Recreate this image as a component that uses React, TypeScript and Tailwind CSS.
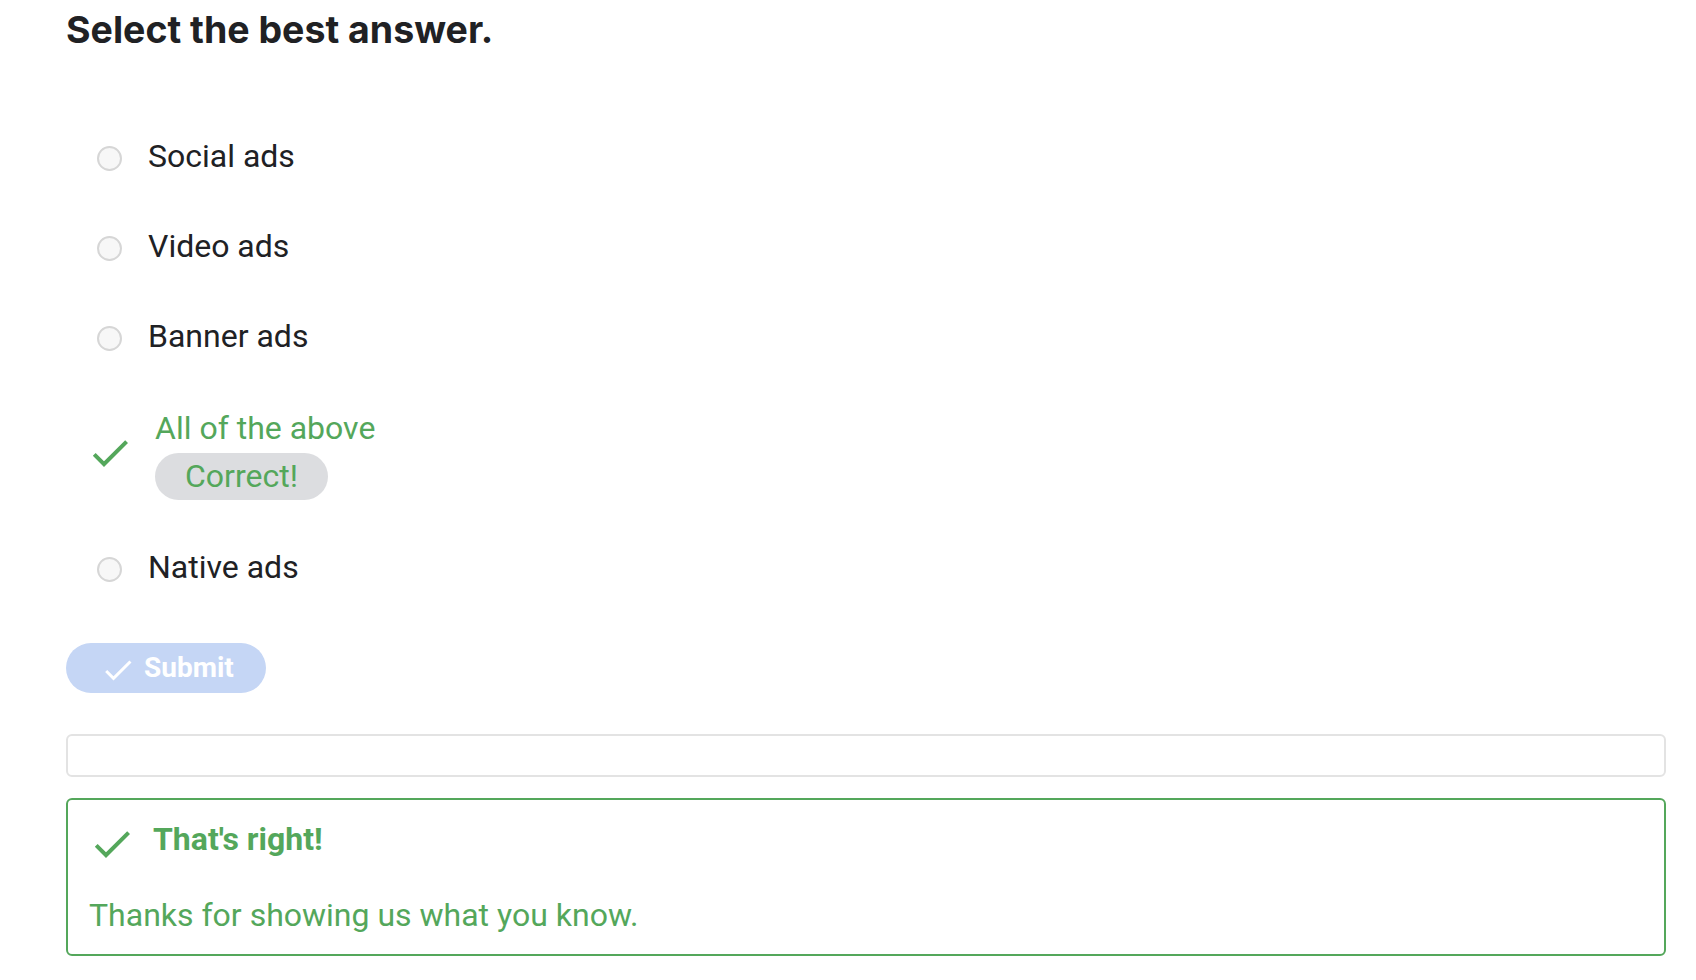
import React from 'react'

const GREEN = '#54a75b'

function CheckIcon({ size, color, className = '' }: { size: number; color: string; className?: string }) {
  return (
    <svg width={size} height={size} viewBox="0 0 24 24" className={className} aria-hidden="true">
      <path fill={color} d="M9 16.17L4.83 12l-1.42 1.41L9 19 21 7l-1.41-1.41z" />
    </svg>
  )
}

function RadioOption({ label, className = '' }: { label: string; className?: string }) {
  return (
    <div className={`flex h-[44px] items-center ${className}`}>
      <div className="ml-[19px] flex h-[44px] w-[48px] items-center justify-center">
        <div className="mt-[4px] h-[25px] w-[25px] rounded-full border-2 border-[#d6d6d6] bg-[#f7f7f7]" />
      </div>
      <span className="ml-[15px] text-[32px] leading-[44px] text-[#202124]">{label}</span>
    </div>
  )
}

const options = ['Social ads', 'Video ads', 'Banner ads']

export default function App() {
  return (
    <div
      className="min-h-screen bg-white pl-[66px] pr-[30px] pt-[8px]"
      style={{ fontFamily: 'Roboto, "Noto Sans", sans-serif' }}
    >
      <h1
        className="text-[37.5px] leading-[44px] font-bold text-[#202124]"
        style={{ fontFamily: 'Inter, "Noto Sans", sans-serif' }}
      >
        Select the best answer.
      </h1>

      <div className="mt-[82px] flex flex-col gap-[46px]">
        {options.map((o) => (
          <RadioOption key={o} label={o} />
        ))}

        {/* the picked answer */}
        <div className="mt-[2px] flex items-center">
          <CheckIcon size={48} color={GREEN} className="ml-[20px] shrink-0" />
          <div className="ml-[21px] flex flex-col items-start">
            <span className="text-[32px] leading-[44px]" style={{ color: GREEN }}>
              All of the above
            </span>
            <span
              className="mt-[3px] rounded-full bg-[#dcdde0] px-[30px] text-[32px] leading-[47px]"
              style={{ color: GREEN }}
            >
              Correct!
            </span>
          </div>
        </div>

        <RadioOption label="Native ads" className="-mt-[1px]" />
      </div>

      <button
        type="button"
        disabled
        className="mt-[54px] flex h-[50px] w-[200px] items-center rounded-full bg-[#c5d6f5] pl-[34px] text-[28px] font-bold text-white"
      >
        <CheckIcon size={36} color="#ffffff" className="mt-[4px]" />
        <span className="ml-[8px] leading-[50px]">Submit</span>
      </button>

      <div className="mt-[41px] h-[43px] w-full rounded-[6px] border-2 border-[#e3e3e3]" />

      <div className="mt-[21px] w-full rounded-[6px] border-2 px-[21px] pt-[17px] pb-[17px]" style={{ borderColor: GREEN }}>
        <div className="flex items-start">
          <CheckIcon size={48} color={GREEN} className="-ml-[1px] mt-[3px] shrink-0" />
          <span className="ml-[17px] text-[32px] leading-[44px] font-bold" style={{ color: GREEN }}>
            That's right!
          </span>
        </div>
        <p className="mt-[25px] text-[32px] leading-[44px]" style={{ color: GREEN }}>
          Thanks for showing us what you know.
        </p>
      </div>
    </div>
  )
}
